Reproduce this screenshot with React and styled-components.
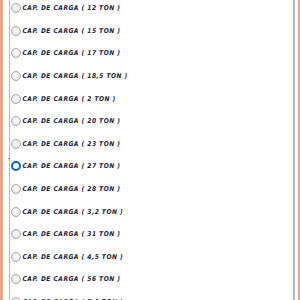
import React from "react";
import styled, { createGlobalStyle } from "styled-components";

const Global = createGlobalStyle`
  html, body { margin: 0; padding: 0; background: #fff; }
  body { font-family: "Liberation Sans", Arial, sans-serif; }
`;

const Frame = styled.div`
  position: relative;
  display: flex;
  width: 300px;
  height: 300px;
  box-sizing: border-box;
  border-left: 3px solid #e9a584;
  border-right: 2px solid #e9a584;
  padding: 0 3px 0 6px;
  background: #fff;
  overflow: hidden;
`;

const Tick = styled.span`
  position: absolute;
  left: 5px;
  top: 158px;
  width: 2px;
  height: 1px;
  background: #9a9a9a;
`;

const Panel = styled.div`
  flex: 1;
  border-left: 1px solid #b6b6e2;
  border-right: 2px solid #b6b6e2;
  overflow: hidden;
`;

const List = styled.div`
  display: flex;
  flex-direction: column;
  margin-top: -3px;
`;

const Row = styled.label`
  display: flex;
  align-items: center;
  gap: 1.5px;
  height: 22.6px;
  padding-left: 1px;
  flex-shrink: 0;
`;

const Radio = styled.span`
  box-sizing: border-box;
  width: 10px;
  height: 10px;
  border-radius: 50%;
  border: ${(p) => (p.$checked ? "2.5px solid #0a64c8" : "1px solid #a8a8a8")};
  background: ${(p) =>
    p.$checked ? "#fff" : "radial-gradient(circle at 50% 40%, #fafafa, #e2e2e2)"};
  flex-shrink: 0;
`;

const Text = styled.span`
  font-family: "Liberation Sans Narrow", "DejaVu Sans Condensed", sans-serif;
  font-stretch: condensed;
  font-size: 6.6px;
  font-weight: bold;
  font-style: italic;
  letter-spacing: 0.5px;
  word-spacing: 0px;
  color: #1c1c38;
  white-space: pre;
`;

const items = [
  "12", "15", "17", "18,5", "2", "20", "23", "27", "28", "3,2", "31", "4,5", "56", "7,5",
];

export default function App() {
  return (
    <>
      <Global />
      <Frame>
        <Tick />
        <Panel>
          <List>
            {items.map((t) => (
              <Row key={t}>
                <Radio $checked={t === "27"} />
                <Text>{`CAP. DE CARGA ( ${t} TON )`}</Text>
              </Row>
            ))}
          </List>
        </Panel>
      </Frame>
    </>
  );
}
